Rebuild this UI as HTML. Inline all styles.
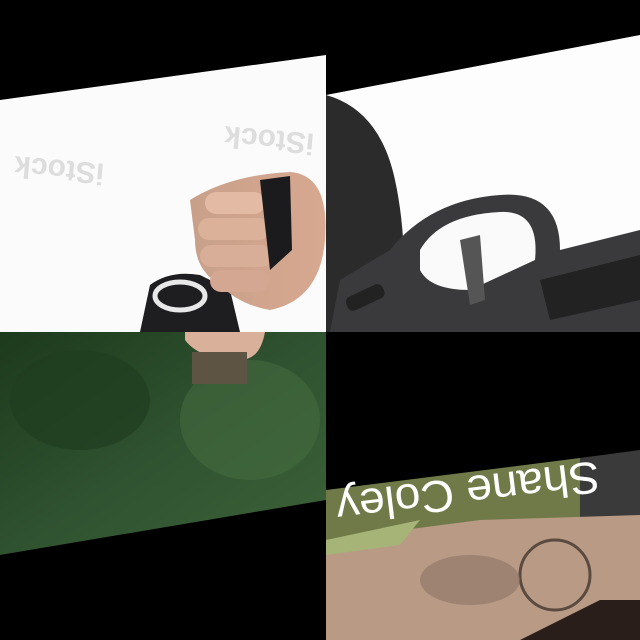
<!DOCTYPE html>
<html><head><style>html,body{margin:0;padding:0;background:#000;width:640px;height:640px;overflow:hidden}</style></head><body>
<svg width="640" height="640" viewBox="0 0 640 640" xmlns="http://www.w3.org/2000/svg" font-family="Liberation Sans, sans-serif">
<defs>
<linearGradient id="tree" x1="0" y1="0" x2="1" y2="1"><stop offset="0" stop-color="#1d3a1c"/><stop offset="0.5" stop-color="#2f5230"/><stop offset="1" stop-color="#3d6238"/></linearGradient>
<linearGradient id="skin" x1="0" y1="0" x2="1" y2="0"><stop offset="0" stop-color="#c8a08a"/><stop offset="1" stop-color="#d8a890"/></linearGradient>
</defs>
<rect width="640" height="640" fill="#000"/>
<polygon points="0,100 326,55 326,332 0,332" fill="#fbfbfb"/>
<text x="60" y="160" font-size="30" font-weight="bold" fill="#ddd" transform="rotate(185 60 160)" text-anchor="middle">iStock</text>
<text x="270" y="130" font-size="30" font-weight="bold" fill="#ddd" transform="rotate(185 270 130)" text-anchor="middle">iStock</text>
<path d="M140,332 L150,285 Q170,270 200,275 L230,290 L240,332 Z" fill="#1e1e20"/>
<ellipse cx="180" cy="296" rx="25" ry="14" fill="none" stroke="#e8e8e8" stroke-width="5"/>
<path d="M190,200 Q230,175 290,172 Q330,175 325,240 Q320,300 270,310 Q240,305 220,285 Q195,270 195,240 Z" fill="url(#skin)"/>
<rect x="205" y="192" width="60" height="22" rx="11" fill="#e3bba5"/>
<rect x="198" y="218" width="72" height="22" rx="11" fill="#dcb19a"/>
<rect x="200" y="245" width="72" height="22" rx="11" fill="#d9ae98"/>
<rect x="210" y="270" width="60" height="22" rx="11" fill="#d4a792"/>
<path d="M260,180 L290,176 L292,250 L270,270 Z" fill="#1b1b1d"/>
<polygon points="326,95 640,35 640,332 326,332" fill="#fdfdfd"/>
<path d="M326,95 Q380,110 395,180 Q410,250 400,332 L326,332 Z" fill="#2b2b2b"/>
<path d="M390,250 Q430,200 500,195 Q560,190 560,250 L640,230 L640,332 L330,332 L340,280 Z" fill="#3a3a3c"/>
<path d="M420,250 Q440,215 500,212 Q540,210 535,260 L470,290 Q430,290 420,270 Z" fill="#fafafa"/>
<path d="M460,240 L480,235 L485,300 L470,305 Z" fill="#555"/>
<path d="M540,280 L640,255 L640,300 L550,320 Z" fill="#222"/>
<rect x="345" y="290" width="40" height="15" rx="6" fill="#222" transform="rotate(-25 365 297)"/>
<polygon points="0,332 326,332 326,500 0,555" fill="url(#tree)"/>
<ellipse cx="80" cy="400" rx="70" ry="50" fill="#1f3d20" opacity="0.7"/>
<ellipse cx="250" cy="420" rx="70" ry="60" fill="#456a40" opacity="0.6"/>
<path d="M185,332 L265,332 Q260,360 240,360 Q200,360 185,340 Z" fill="#d9b09a"/>
<rect x="192" y="352" width="55" height="32" fill="#5d5443"/>
<polygon points="326,490 580,458 580,523 326,555" fill="#6f7a48"/>
<polygon points="580,458 640,450 640,520 580,525" fill="#3a3a3a"/>
<polygon points="326,540 480,520 640,515 640,640 326,640" fill="#b89a85"/>
<polygon points="326,555 400,545 420,520 326,540" fill="#a7b477"/>
<circle cx="555" cy="575" r="35" fill="none" stroke="#5a4a40" stroke-width="3"/>
<ellipse cx="470" cy="580" rx="50" ry="25" fill="#8e7566" opacity="0.6"/>
<polygon points="520,640 600,600 640,600 640,640" fill="#2a1e1a"/>
<text x="468" y="492" font-size="45" fill="#fff" text-anchor="middle" textLength="265" lengthAdjust="spacingAndGlyphs" transform="rotate(173 468 492) translate(0,15)">Shane Coley</text>
</svg>
</body></html>
